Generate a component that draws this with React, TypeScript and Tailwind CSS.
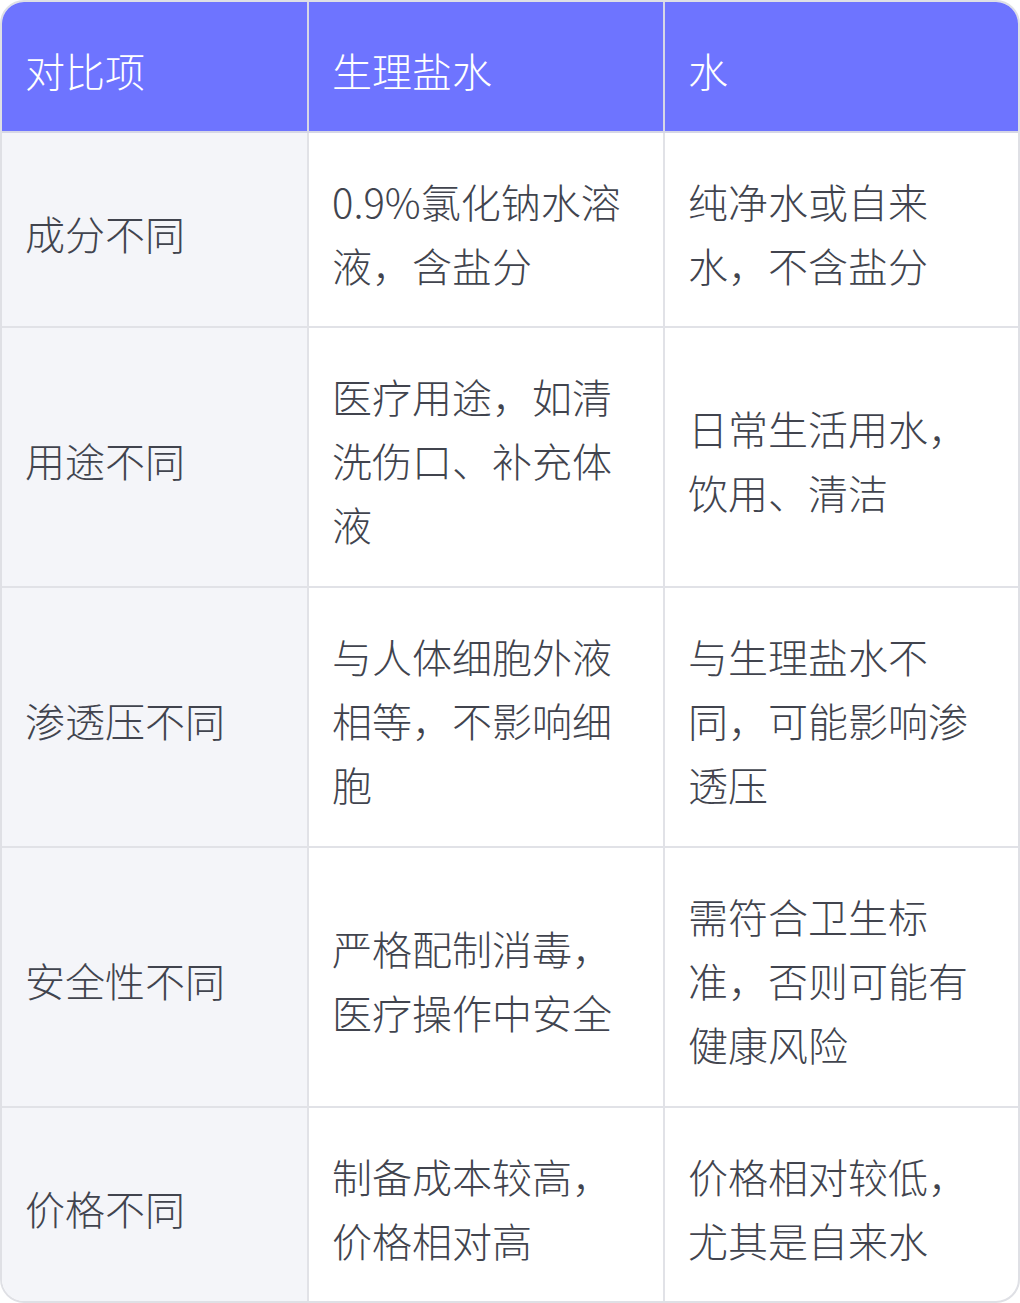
const rows = [
  ['成分不同', '0.9%氯化钠水溶液，含盐分', '纯净水或自来水，不含盐分'],
  ['用途不同', '医疗用途，如清洗伤口、补充体液', '日常生活用水，饮用、清洁'],
  ['渗透压不同', '与人体细胞外液相等，不影响细胞', '与生理盐水不同，可能影响渗透压'],
  ['安全性不同', '严格配制消毒，医疗操作中安全', '需符合卫生标准，否则可能有健康风险'],
  ['价格不同', '制备成本较高，价格相对高', '价格相对较低，尤其是自来水'],
]

const heights = ['h-[195px]', 'h-[260px]', 'h-[260px]', 'h-[260px]', 'h-[193px]']

export default function App() {
  return (
    <div className="w-[1020px] bg-white" style={{ fontFamily: '"Noto Sans CJK SC", "Noto Sans", sans-serif' }}>
      <div className="border-2 border-[#dfe0e5] rounded-[24px] overflow-hidden">
        <table className="w-full table-fixed border-separate border-spacing-0 text-[40px] leading-[64px] font-light">
          <colgroup>
            <col className="w-[307px]" />
            <col className="w-[356px]" />
            <col className="w-[353px]" />
          </colgroup>
          <thead>
            <tr className="bg-[#6e74ff] text-white h-[131px]">
              <th className="text-left font-light pl-[23px] pr-[22px] pt-[6px] pb-0 border-r-2 border-b-2 border-[#d6d7e6]">对比项</th>
              <th className="text-left font-light pl-[23px] pr-[22px] pt-[6px] pb-0 border-r-2 border-b-2 border-[#d6d7e6]">生理盐水</th>
              <th className="text-left font-light pl-[23px] pr-[22px] pt-[6px] pb-0 border-b-2 border-[#d6d7e6]">水</th>
            </tr>
          </thead>
          <tbody className="text-[#41444e]">
            {rows.map((r, i) => {
              const last = i === rows.length - 1
              return (
                <tr key={i} className={heights[i]}>
                  <td className={`align-middle pl-[23px] pr-[22px] pt-[6px] pb-0 bg-[#f4f5f9] border-r-2 border-[#e1e2e7] ${last ? '' : 'border-b-2'}`}>{r[0]}</td>
                  <td className={`align-middle pl-[23px] pr-[22px] pt-[6px] pb-0 border-r-2 border-[#e1e2e7] ${last ? '' : 'border-b-2'}`}>{r[1]}</td>
                  <td className={`align-middle pl-[23px] pr-[22px] pt-[6px] pb-0 border-[#e1e2e7] ${last ? '' : 'border-b-2'}`}>{r[2]}</td>
                </tr>
              )
            })}
          </tbody>
        </table>
      </div>
    </div>
  )
}
